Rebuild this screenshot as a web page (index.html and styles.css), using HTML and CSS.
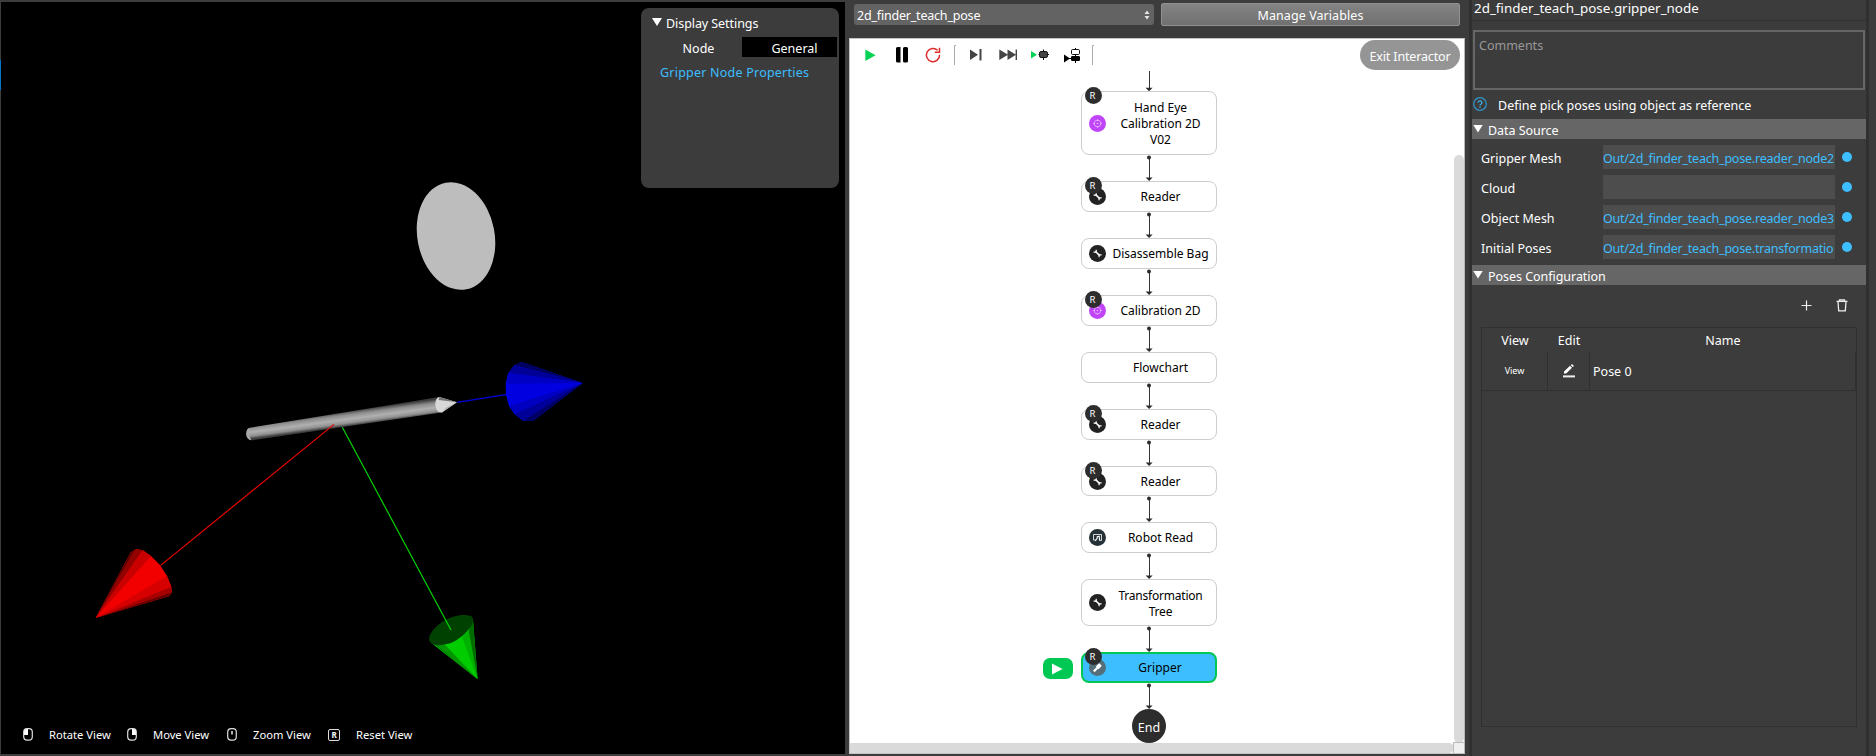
FILE: index.html
```html
<!DOCTYPE html>
<html lang="en">
<head>
<meta charset="utf-8">
<title>Flowchart Editor</title>
<link rel="stylesheet" href="styles.css">
</head>
<body>
<svg width="0" height="0" class="defs" aria-hidden="true">
  <symbol id="tool" viewBox="0 0 17 17"><circle cx="8.5" cy="8.5" r="8.5" fill="#222"/><path d="M6.5 6.5 10.5 10.3" stroke="#fff" stroke-width="1.6" fill="none"/><path d="M4.6 7.1H7.2V4.7M12.6 9.9H10.1V12.3" stroke="#fff" stroke-width="1.2" fill="none"/></symbol>
  <symbol id="target" viewBox="0 0 17 17"><circle cx="8.5" cy="8.5" r="8.5" fill="#c044f8"/><g stroke="#e9b4ff" fill="none" stroke-width=".8"><circle cx="8.5" cy="8.5" r="3.3"/><path d="M8.5 4V6M8.5 11V13M4 8.5H6M11 8.5H13"/></g><circle cx="8.5" cy="8.5" r=".8" fill="#e9b4ff"/></symbol>
  <symbol id="robot" viewBox="0 0 17 17"><circle cx="8.5" cy="8.5" r="8.5" fill="#263138"/><g stroke="#fff" fill="none"><path d="M6.5 11H4.5V5.5H12.5V11.5H11" stroke-width=".8"/><path d="M6.2 11.8 8 9.6 8.3 7.6 10.2 7.2 10.6 11.6" stroke-width="1.1"/></g></symbol>
  <symbol id="grip" viewBox="0 0 17 17"><circle cx="8.5" cy="8.5" r="8.5" fill="#546e7a"/><path d="M4.8 12.4 8.5 8.7" stroke="#fff" stroke-width="2.2"/><path d="M6.8 7.5 10 4.3 11.3 5 12.7 7 9.5 10.2Z" fill="#fff"/></symbol>
  <symbol id="arrow" viewBox="0 0 10 26"><path d="M5.5 2V24" stroke="#333" fill="none"/><circle cx="5" cy="2.6" r="2" fill="#2d2d2d"/><path d="M1.6 22.4H8.6L5.1 26Z" fill="#2d2d2d"/></symbol>
</svg>
<div class="app">
  <section class="viewport">
    <i class="edge"></i>
    <svg class="scene" width="844" height="752" viewBox="1 2 844 752">
      <defs>
        <linearGradient id="tube" gradientUnits="userSpaceOnUse" x1="770" y1="217" x2="776" y2="262"><stop offset="0" stop-color="#3c3c3c"/><stop offset=".25" stop-color="#8c8c8c"/><stop offset=".55" stop-color="#b0b0b0"/><stop offset=".8" stop-color="#929292"/><stop offset="1" stop-color="#3c3c3c"/></linearGradient>
      </defs>
      <ellipse cx="456" cy="236" rx="38.6" ry="54.3" transform="rotate(-11 456 236)" fill="#bdbdbd"/>
      <g transform="translate(80 340) scale(.33333)">
        <path d="M510 263 1078 171 1090 217 516 301Q499 300 499 282Q499 266 510 263Z" fill="url(#tube)"/>
        <path d="M510 263Q499 265 499 281Q500 299 514 301Q503 281 510 263Z" fill="#aaa"/>
        <path d="M1078 171 1131 187 1087 217Q1068 219 1066 194Q1066 173 1078 171Z" fill="#d8d8d8"/>
        <path d="M1078 171 1131 187 1076 180Z" fill="#777"/><path d="M1131 187 1087 217 1098 203Z" fill="#aaa"/>
        <path d="M1131 187 1278 164" stroke="#0000e0" stroke-width="3.5"/>
        <path d="M1508 129 1325 66 1303 76 1285 99 1277 131 1278 166 1287 198 1304 223 1329 242 1359 243Z" fill="#0000e0"/>
        <path d="M1508 129 1325 66 1303 76Z" fill="#000060"/>
        <path d="M1508 129 1303 76 1285 99Z" fill="#000098"/>
        <path d="M1508 129 1285 99 1277 131Z" fill="#0000c4"/>
        <path d="M1508 129 1287 198 1304 223Z" fill="#0000c0"/>
        <path d="M1508 129 1304 223 1329 242Z" fill="#000098"/>
        <path d="M1508 129 1329 242 1359 243Z" fill="#000064"/>
        <path d="M762 253 242 676" stroke="#f00000" stroke-width="3.5"/>
        <path d="M47 834 152 637 170 627 188 631 213 648 240 675 261 708 274 740 275 757 269 768Z" fill="#f20000"/>
        <path d="M47 834 152 637 170 627Z" fill="#600000"/>
        <path d="M47 834 165 628 170 627 188 631Z" fill="#920000"/>
        <path d="M47 834 188 631 213 648Z" fill="#ca0000"/>
        <path d="M47 834 261 708 274 740Z" fill="#d60000"/>
        <path d="M47 834 274 740 275 757Z" fill="#a60000"/>
        <path d="M47 834 275 757 269 768Z" fill="#650000"/>
        <path d="M1048 900 1062 915 1193 1018 1179 840Z" fill="#00cc00"/>
        <path d="M1048 900 1075 917 1193 1018Z" fill="#006000"/>
        <path d="M1070 915 1095 914 1193 1018Z" fill="#009600"/>
        <path d="M1146 891 1166 872 1193 1018Z" fill="#00b000"/>
        <path d="M1166 872 1179 840 1193 1018Z" fill="#006c00"/>
        <path d="M1048 900C1044 878 1080 842 1120 830C1145 823 1177 823 1179 836C1183 857 1151 889 1118 907C1089 919 1050 920 1048 900Z" fill="#004000"/>
        <path d="M787 262 1113 870" stroke="#00d800" stroke-width="3.5"/>
      </g>
    </svg>
    <div class="display">
      <div class="display-title"><i class="tri"></i><span>Display Settings</span></div>
      <div class="tabs"><span class="tab">Node</span><span class="tab on">General</span></div>
      <div class="link">Gripper Node Properties</div>
    </div>
    <div class="hints">
      <svg width="10" height="13" viewBox="0 0 10 13"><path d="M1 1H5V7H1Z" fill="#fff"/><rect x=".7" y=".7" width="8.6" height="11.4" rx="3.4" fill="none" stroke="#ddd" stroke-width="1.2"/></svg><span class="h1">Rotate View</span>
      <svg width="10" height="13" viewBox="0 0 10 13"><path d="M5 1H9V7H5Z" fill="#fff"/><rect x=".7" y=".7" width="8.6" height="11.4" rx="3.4" fill="none" stroke="#ddd" stroke-width="1.2"/></svg><span class="h2">Move View</span>
      <svg width="10" height="13" viewBox="0 0 10 13"><path d="M5 3V6.5" stroke="#fff" stroke-width="1.4"/><rect x=".7" y=".7" width="8.6" height="11.4" rx="3.4" fill="none" stroke="#ddd" stroke-width="1.2"/></svg><span class="h3">Zoom View</span>
      <span class="key">R</span><span class="h4">Reset View</span>
    </div>
  </section>

  <section class="middle">
    <div class="top">
      <div class="select"><span>2d_finder_teach_pose</span><svg width="6" height="10" viewBox="0 0 6 10"><path d="M.5 4 3 .5 5.5 4ZM.5 6 3 9.5 5.5 6Z" fill="#e5e5e5"/></svg></div>
      <button class="manage">Manage Variables</button>
    </div>
    <div class="canvas">
      <div class="toolbar">
        <svg width="154" height="24" viewBox="865 43 154 24">
          <path d="M865.3 49.6 875.6 55.3 865.3 61Z" fill="#06d255"/>
          <path d="M896 48.5Q896 47 897.5 47H900.5V62.5H897.5Q896 62.5 896 61ZM903 48.5Q903 47 904.5 47H906.5Q908 47 908 48.5V61Q908 62.5 906.5 62.5H904.5Q903 62.5 903 61Z" fill="#000"/>
          <path d="M937.6 50.3A6.6 6.6 0 1 0 939.6 54.8M939.5 47.8V52.2H934.8" fill="none" stroke="#dc2c2c" stroke-width="1.5"/>
          <path d="M954.5 45.5V65M954.5 45.5H956" stroke="#aaa" fill="none"/>
          <path d="M970 49.5 978 54.7 970 60ZM979.5 49H981.5V60.5H979.5Z" fill="#444"/>
          <path d="M999.3 49.5 1008 54.7 999.3 60ZM1007.5 49.5 1016 54.7 1007.5 60ZM1015.6 49.5H1017V60H1015.6Z" fill="#444"/>
        </svg>
        <svg width="80" height="24" viewBox="1019 43 80 24">
          <path d="M1031 51 1037 54.8 1031 58.6Z" fill="#06d255"/>
          <path d="M1038.5 54.5H1049M1043.5 49.5V60" stroke="#111"/><rect x="1039.5" y="51.5" width="8" height="6" rx="1.6" fill="#444" stroke="#111"/>
          <path d="M1064 54.5 1070 58.5 1064 62.5Z" fill="#000"/><path d="M1075.5 48V63M1069 58.5H1080" stroke="#000"/>
          <rect x="1071.5" y="49.5" width="8" height="5" rx="1.2" fill="#fff" stroke="#111"/><rect x="1071" y="56" width="9" height="5" rx="1.2" fill="#000"/>
          <path d="M1092.5 45.5V65M1092.5 45.5H1094" stroke="#aaa" fill="none"/>
        </svg>
        <button class="exit">Exit Interactor</button>
      </div>
      <div class="flow">
        <svg class="arr lead" width="10" height="20" viewBox="0 0 10 20"><path d="M5.5 0V18" stroke="#333"/><path d="M1.6 16.7H8.6L5.1 20.3Z" fill="#2d2d2d"/></svg>
        <div class="node n3"><b>R</b><svg><use href="#target"/></svg><span>Hand Eye<br>Calibration 2D<br>V02</span></div>
        <svg class="arr"><use href="#arrow"/></svg>
        <div class="node"><b>R</b><svg><use href="#tool"/></svg><span>Reader</span></div>
        <svg class="arr"><use href="#arrow"/></svg>
        <div class="node"><svg><use href="#tool"/></svg><span>Disassemble Bag</span></div>
        <svg class="arr"><use href="#arrow"/></svg>
        <div class="node"><b>R</b><svg><use href="#target"/></svg><span>Calibration 2D</span></div>
        <svg class="arr"><use href="#arrow"/></svg>
        <div class="node"><svg></svg><span>Flowchart</span></div>
        <svg class="arr"><use href="#arrow"/></svg>
        <div class="node"><b>R</b><svg><use href="#tool"/></svg><span>Reader</span></div>
        <svg class="arr"><use href="#arrow"/></svg>
        <div class="node short"><b>R</b><svg><use href="#tool"/></svg><span>Reader</span></div>
        <svg class="arr"><use href="#arrow"/></svg>
        <div class="node"><svg><use href="#robot"/></svg><span>Robot Read</span></div>
        <svg class="arr"><use href="#arrow"/></svg>
        <div class="node n2"><svg><use href="#tool"/></svg><span>Transformation<br>Tree</span></div>
        <svg class="arr"><use href="#arrow"/></svg>
        <div class="node active"><i class="chip"><svg class="chip-icon" viewBox="0 0 12 12"><path d="M1 .5 11.5 6 1 11.5Z" fill="#fff"/></svg></i><b>R</b><svg><use href="#grip"/></svg><span>Gripper</span></div>
        <svg class="arr"><use href="#arrow"/></svg>
        <div class="end">End</div>
      </div>
      <i class="vbar"></i><i class="hbar"></i><i class="corner"></i>
    </div>
  </section>

  <section class="props">
    <div class="prop-title">2d_finder_teach_pose.gripper_node</div>
    <div class="comments">Comments</div>
    <div class="help"><svg width="14" height="14" viewBox="0 0 14 14"><circle cx="7" cy="7" r="6.3" fill="none" stroke="#2f97cc" stroke-width="1.2"/><path d="M5 5.6Q5.1 3.9 7 3.9T9 5.6Q9 6.6 7.9 7.2Q7 7.7 7 8.6M7 9.6V10.9" fill="none" stroke="#3eaee6" stroke-width="1.2"/></svg><span>Define pick poses using object as reference</span></div>
    <div class="bar"><i class="tri"></i><span>Data Source</span></div>
    <div class="fields">
      <div class="row"><label>Gripper Mesh</label><div class="field">Out/2d_finder_teach_pose.reader_node2</div><i class="dot"></i></div>
      <div class="row"><label>Cloud</label><div class="field"></div><i class="dot"></i></div>
      <div class="row"><label>Object Mesh</label><div class="field">Out/2d_finder_teach_pose.reader_node3</div><i class="dot"></i></div>
      <div class="row"><label>Initial Poses</label><div class="field">Out/2d_finder_teach_pose.transformatio</div><i class="dot"></i></div>
    </div>
    <div class="bar"><i class="tri"></i><span>Poses Configuration</span></div>
    <div class="actions">
      <svg width="11" height="11" viewBox="0 0 11 11"><path d="M5.5 .5V10.5M.5 5.5H10.5" stroke="#eee" stroke-width="1.2"/></svg>
      <svg width="12" height="13" viewBox="0 0 12 13"><path d="M.5 2.3H11.5M3.5 2V.8H8.5V2M2 2.8 2.7 11.8H9.3L10 2.8" fill="none" stroke="#eee" stroke-width="1.3"/></svg>
    </div>
    <div class="table">
      <div class="tr head"><span>View</span><span>Edit</span><span>Name</span></div>
      <div class="tr item"><span class="small">View</span><span><svg width="12" height="14" viewBox="0 0 12 14"><path d="M1 9.6V7.6L7 1.8 9 3.8 3.2 9.6ZM7.8 1.2 8.9 0 11 2 9.8 3.1Z" fill="#fff"/><path d="M0 12.4H12" stroke="#eee" stroke-width="2"/></svg></span><span class="name">Pose 0</span></div>
    </div>
  </section>
</div>
</body>
</html>
```
FILE: styles.css
```css
* { box-sizing: border-box; }
body { margin: 0; width: 1876px; height: 756px; overflow: hidden; background: #3c3c3c; color: #fff; font: 12.5px/16px "Noto Sans", "Open Sans", sans-serif; }
button { font: inherit; color: inherit; padding: 0; }
svg { display: block; flex: none; }
.defs { position: absolute; }
.app { display: grid; grid-template-columns: 849px 620px 407px; height: 756px; }
.tri { flex: none; width: 10px; height: 8px; background: #fff; clip-path: polygon(0 0, 100% 0, 50% 100%); }

.viewport { position: relative; margin: 2px 4px 2px 1px; background: #000; }
.edge { position: absolute; left: -1px; top: 58px; width: 1px; height: 30px; background: #0078c8; }
.display { position: absolute; left: 640px; top: 6px; width: 198px; height: 180px; border-radius: 8px; background: #3c3c3c; padding-top: 8px; }
.display-title { display: flex; align-items: center; gap: 4px; padding-left: 11px; height: 16px; letter-spacing: -.07px; }
.display-title .tri { margin-top: -4px; }
.tabs { display: flex; margin: 5px 2px 0 16px; height: 20px; line-height: 23px; }
.tab { width: 85px; text-align: center; padding-right: 2px; }
.tab.on { width: 95px; background: #000; padding: 0 0 0 10px; }
.link { color: #3dbeff; margin: 8px 0 0 19px; white-space: nowrap; letter-spacing: .22px; }
.hints { position: absolute; left: 22px; bottom: 9px; height: 20px; display: flex; align-items: center; font-size: 11.2px; white-space: nowrap; }
.hints svg, .hints .key { margin-top: -1px; }
.hints span:not(.key) { margin-left: 16px; }
.h1 { width: 78px; } .h2 { width: 74px; } .h3 { width: 75px; } .h4 { width: 70px; }
.key { width: 12px; height: 12px; border: 1px solid #ddd; border-radius: 2px; font-size: 8px; line-height: 10px; text-align: center; font-weight: 700; }

.middle { display: flex; flex-direction: column; border-right: 3px solid #3c3c3c; }
.top { display: flex; height: 38px; padding: 3px 0 0 5px; gap: 7px; }
.select { display: flex; align-items: center; justify-content: space-between; width: 300px; height: 21px; margin-top: 1px; padding: 0 4px 0 3px; background: #636363; border-radius: 3px; letter-spacing: -.2px; }
.select span { padding-top: 2px; }
.manage { width: 299px; height: 23px; padding-top: 2px; border: 1px solid #919191; border-radius: 2px; background: linear-gradient(#848484, #707070); letter-spacing: .08px; }
.canvas { position: relative; width: 616px; height: 716px; background: #fff; border: 1px solid #c4c4c4; border-right-color: #b8b8b8; }
.toolbar { display: flex; height: 32px; padding: 4px 4px 0 15px; }
.exit { margin: -3px 0 0 auto; width: 100px; height: 30px; border: 0; border-radius: 15px; background: #959595; padding-top: 4px; letter-spacing: -.15px; }
.flow { display: flex; flex-direction: column; align-items: center; padding-right: 16px; color: #000; }
.arr { width: 10px; height: 26px; }
.arr.lead { height: 20px; }
.node { position: relative; flex: none; display: flex; align-items: center; width: 136px; height: 31px; border: 1px solid #cdcdcd; border-radius: 8px; background: #fff; padding-left: 7px; font-size: 12px; }
.node > svg { width: 17px; height: 17px; }
.node span { flex: 1; text-align: center; white-space: nowrap; padding: 1px 3px 0 2px; }
.node b { position: absolute; left: 3px; top: -5px; width: 17px; height: 17px; border-radius: 50%; background: #2d2d2d; color: #fff; font: 9.5px/18px "Noto Sans", sans-serif; text-align: center; padding-right: 2px; }
.n3 { height: 64px; }
.n3 span { padding-top: 2px; }
.n2 { height: 47px; letter-spacing: -.22px; }
.n2 span { padding-top: 2px; }
.short { height: 30px; }
.short span { padding-top: 2px; }
.active { background: #3dbeff; border: 2px solid #00c853; padding-left: 6px; }
.active b { left: 2px; top: -6px; }
.chip { position: absolute; left: -40px; top: 4px; width: 30px; height: 21px; border-radius: 7px; background: #00c853; display: grid; place-items: center start; padding-left: 8px; }
.chip-icon { width: 12px; height: 12px; }
.end { width: 34px; height: 34px; border-radius: 50%; background: #2d2d2d; color: #fff; text-align: center; line-height: 37px; }
.vbar { position: absolute; right: 0; top: 116px; width: 10px; height: 588px; border-radius: 5px; background: #dadada; }
.hbar { position: absolute; left: 0; bottom: 0; width: 604px; height: 10px; border-radius: 0 5px 5px 0; background: #dadada; }
.corner { position: absolute; right: 0; bottom: 0; width: 11px; height: 11px; background: #f0f0f0; border: solid #bbb; border-width: 1px 0 0 1px; }

.props { width: 400px; height: 756px; border: solid #303030; border-width: 0 3px; }
.prop-title { height: 21px; border-bottom: 1px solid #303030; padding: 1px 2px 0; font-size: 13.4px; line-height: 15px; white-space: nowrap; }
.comments { height: 60px; margin: 9px 1px 0; border: 2px solid #666; padding: 6px 4px; color: #999; }
.help { display: flex; align-items: center; height: 29px; gap: 11px; padding-left: 1px; white-space: nowrap; }
.help svg { margin-top: -1px; } .help span { padding-top: 2px; }
.bar { display: flex; align-items: center; height: 20px; background: #666; gap: 5px; padding-left: 1px; letter-spacing: -.04px; }
.bar .tri { margin-top: -1px; } .bar span { padding-top: 3px; }
.fields { display: flex; flex-direction: column; gap: 6px; padding: 6px 0; }
.row { display: flex; align-items: center; height: 24px; padding-left: 9px; }
.row label { width: 122px; padding-top: 3px; }
.field { width: 232px; height: 24px; line-height: 27px; background: #4d4d4d; color: #3dbeff; overflow: hidden; white-space: nowrap; letter-spacing: -.21px; }
.dot { width: 10px; height: 10px; border-radius: 50%; background: #3dbeff; margin-left: 7px; }
.actions { display: flex; justify-content: flex-end; align-items: center; gap: 24px; height: 42px; padding-right: 18px; }
.actions svg { margin-top: -1px; }
.table { margin: 0 9px; height: 400px; border: 1px solid #303030; }
.tr { display: grid; grid-template-columns: 66px 42px 1fr; }
.tr span { display: grid; place-items: center; }
.head { height: 24px; padding-top: 2px; }
.item { height: 39px; border-bottom: 1px solid #303030; }
.item span { border-right: 1px solid #303030; }
.tr .small { font-size: 9px; }
.tr .name { justify-content: start; padding: 1px 0 0 3px; }
```
